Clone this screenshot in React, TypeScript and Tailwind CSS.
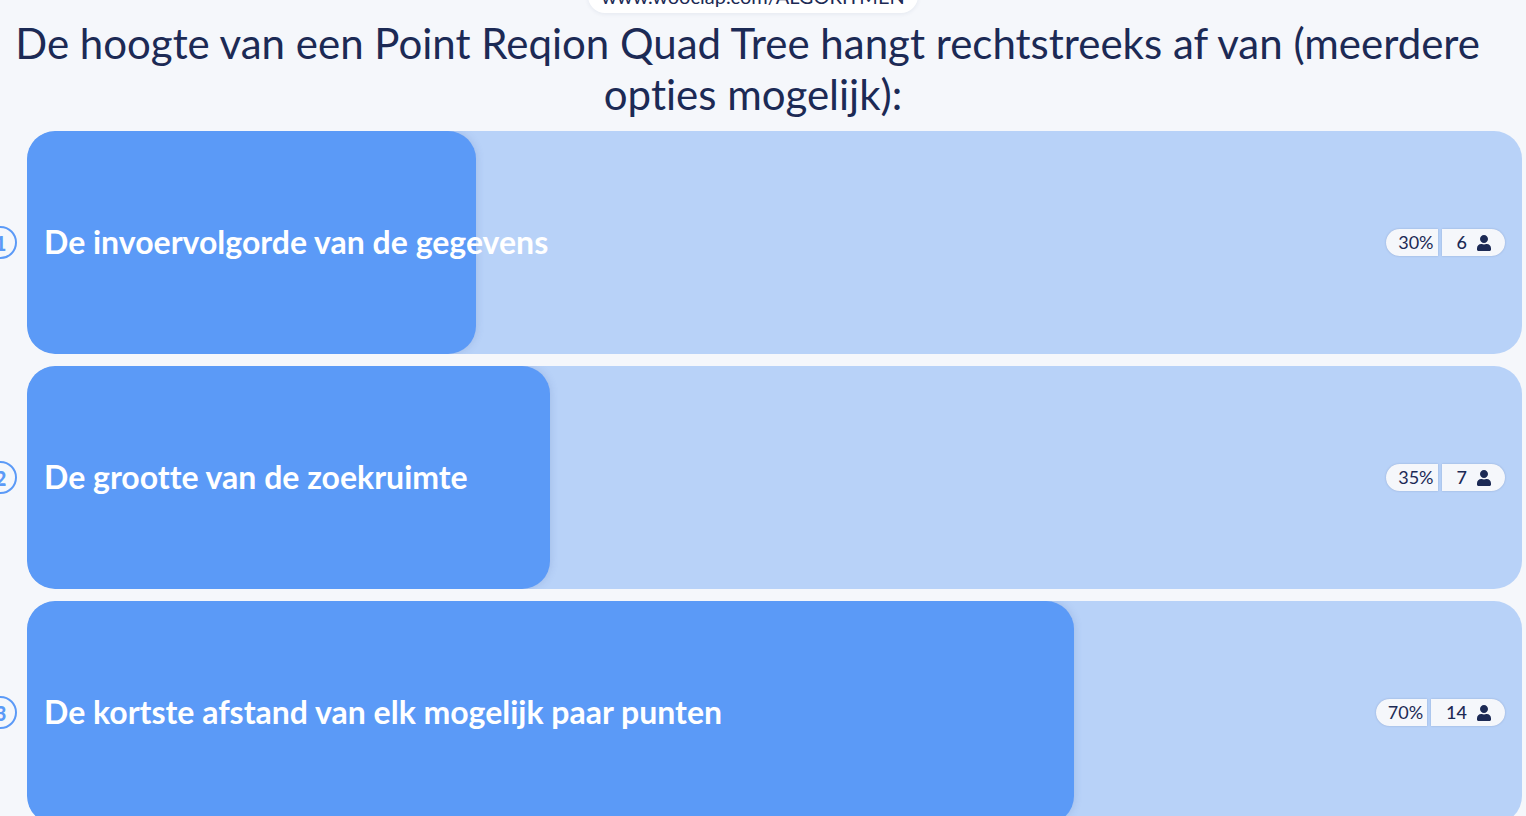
import React from 'react';
import { FaUser } from 'react-icons/fa';

const options = [
  { n: 1, label: 'De invoervolgorde van de gegevens', pct: 30, count: 6 },
  { n: 2, label: 'De grootte van de zoekruimte', pct: 35, count: 7 },
  { n: 3, label: 'De kortste afstand van elk mogelijk paar punten', pct: 70, count: 14 },
];

const OptionRow = ({ n, label, pct, count }: { n: number; label: string; pct: number; count: number }) => (
  <div className="flex items-center shrink-0 h-[223px]">
    <div className="shrink-0 w-[33px] h-[33px] -ml-4 mr-[10px] rounded-full border-2 border-[#5b9af7] flex items-center justify-center text-[#5b9af7] text-[20px] font-black bg-[#f5f7fb]">
      {n}
    </div>
    <div className="relative flex-1 h-full mr-1 rounded-[28px] bg-[#b8d2f8] overflow-hidden flex items-center justify-between pl-[17px] pr-[17px]">
      {/* fill */}
      <div
        className="absolute inset-y-0 left-0 rounded-[28px] bg-[#5b9af7] shadow-[0_0_8px_rgba(60,90,160,0.2)]"
        style={{ width: `${pct}%` }}
      />
      <span className="relative -top-px text-white text-[32px] font-bold whitespace-nowrap">{label}</span>
      <div className="relative flex items-center gap-1 text-[18px] text-[#1c2a55] h-[27px]">
        <span className="h-full pl-3 pr-1 flex items-center rounded-l-full bg-[#f5f7fb] shadow-[0_0_2px_rgba(30,50,100,0.25)]">{pct}%</span>
        <span className="h-full pl-[15px] pr-[13px] flex items-center gap-[9px] rounded-r-full bg-[#f5f7fb] font-medium shadow-[0_0_2px_rgba(30,50,100,0.25)]">
          {count}
          <FaUser className="w-4 h-4" />
        </span>
      </div>
    </div>
  </div>
);

export default function App() {
  return (
    <div className="h-screen overflow-hidden bg-[#f5f7fb] font-['Lato',sans-serif] [font-variant-ligatures:none] text-[#1c2a55]">
      <div className="pr-5 flex justify-center">
        <div className="w-[330px] h-[34px] -mt-[21px] rounded-[20px] bg-white shadow-[0_1px_4px_rgba(30,50,100,0.08)] flex items-center justify-center text-[20px] whitespace-nowrap">
          www.wooclap.com/ALGORITMEN
        </div>
      </div>
      <h1 className="mt-[5px] pr-5 text-center text-[42px] leading-[51px] font-normal text-[#1c2a55]">
        De hoogte van een Point Reqion Quad Tree hangt rechtstreeks af van (meerdere&nbsp;<br />opties mogelijk):
      </h1>
      <div className="mt-[11px] flex flex-col gap-3">
        {options.map((o) => (
          <OptionRow key={o.n} {...o} />
        ))}
      </div>
    </div>
  );
}
